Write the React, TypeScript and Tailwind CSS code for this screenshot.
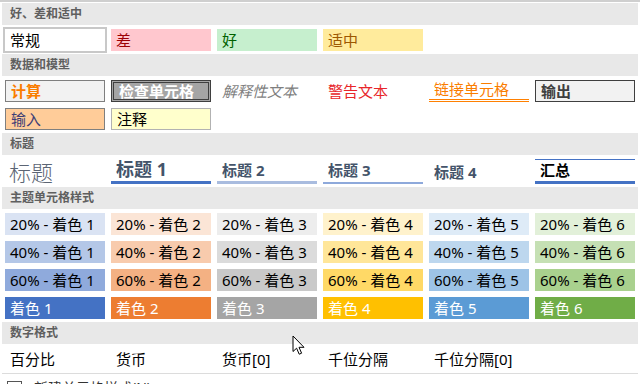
import type { ReactNode } from "react";

const font = { fontFamily: '"Noto Sans", "Noto Sans CJK SC", sans-serif' };

const accents = [
  { n: 1, c20: "bg-[#dae3f3]", c40: "bg-[#b4c7e7]", c60: "bg-[#8faadc]", c: "bg-[#4472c4]" },
  { n: 2, c20: "bg-[#fbe5d6]", c40: "bg-[#f8cbad]", c60: "bg-[#f4b183]", c: "bg-[#ed7d31]" },
  { n: 3, c20: "bg-[#ededed]", c40: "bg-[#dbdbdb]", c60: "bg-[#c9c9c9]", c: "bg-[#a5a5a5]" },
  { n: 4, c20: "bg-[#fff2cc]", c40: "bg-[#ffe699]", c60: "bg-[#ffd966]", c: "bg-[#ffc000]" },
  { n: 5, c20: "bg-[#deebf7]", c40: "bg-[#bdd7ee]", c60: "bg-[#9dc3e6]", c: "bg-[#5b9bd5]" },
  { n: 6, c20: "bg-[#e2f0d9]", c40: "bg-[#c5e0b4]", c60: "bg-[#a9d18e]", c: "bg-[#70ad47]" },
];

function Band({ children }: { children: ReactNode }) {
  return (
    <div className="h-[22px] bg-[#e8e8e8] pl-[8px] flex items-center text-[12px] font-bold text-[#5f5f5f]">
      {children}
    </div>
  );
}

function Rows({ children }: { children: ReactNode }) {
  return <div className="pt-[4px] pb-[3px] pl-[3px] flex flex-col gap-[6px]">{children}</div>;
}

function Row({ children }: { children: ReactNode }) {
  return <div className="grid grid-cols-[repeat(6,100px)] gap-x-[6px]">{children}</div>;
}

function Cell({ className = "", children }: { className?: string; children?: ReactNode }) {
  return (
    <div className={`h-[22px] flex items-center pl-[5px] text-[15px] leading-none whitespace-nowrap overflow-hidden ${className}`}>
      {children}
    </div>
  );
}

function Cursor() {
  return (
    <svg className="absolute left-[292px] top-[333px]" width="14" height="21" viewBox="0 0 14 21">
      <path
        d="M1 1 L1 16.5 L4.6 13.2 L7.2 19.2 L9.6 18.2 L7 12.3 L12 12.3 Z"
        fill="#ffffff"
        stroke="#000000"
        strokeWidth="1"
        strokeLinejoin="round"
      />
    </svg>
  );
}

export default function App() {
  return (
    <div className="relative w-[640px] h-[384px] overflow-hidden bg-white border-t-2 border-[#cfcfcf] px-[2px]" style={font}>
      <div className="mt-[1px]">
        <Band>好、差和适中</Band>
        <Rows>
          <Row>
            <Cell className="bg-white text-black shadow-[0_0_0_2px_#c8c8c8]">常规</Cell>
            <Cell className="bg-[#ffc7ce] text-[#9c0006]">差</Cell>
            <Cell className="bg-[#c6efce] text-[#006100]">好</Cell>
            <Cell className="bg-[#ffeb9c] text-[#9c5700]">适中</Cell>
          </Row>
        </Rows>

        <Band>数据和模型</Band>
        <Rows>
          <Row>
            <Cell className="bg-[#f2f2f2] border border-[#7f7f7f] text-[#fa7d00] font-bold">计算</Cell>
            <Cell className="bg-[#a5a5a5] border-[3px] border-double border-[#3f3f3f] text-white font-bold pl-[3px]">检查单元格</Cell>
            <Cell className="italic text-[#7f7f7f]">解释性文本</Cell>
            <Cell className="text-[#e8262a]">警告文本</Cell>
            <Cell className="text-[#fa7d00] border-b-[3px] border-double border-[#ff8001]">链接单元格</Cell>
            <Cell className="bg-[#f2f2f2] border border-[#3f3f3f] text-[#3f3f3f] font-bold">输出</Cell>
          </Row>
          <Row>
            <Cell className="bg-[#ffcc99] border border-[#7f7f7f] text-[#3f3f76]">输入</Cell>
            <Cell className="bg-[#ffffcc] border border-[#b2b2b2] text-black">注释</Cell>
          </Row>
        </Rows>

        <Band>标题</Band>
        <div className="pt-[4px] pb-[3px] pl-[3px]">
          <div className="grid grid-cols-[repeat(6,100px)] gap-x-[6px] h-[25px]">
            <div className="flex items-end pl-[4px] pb-[1px] text-[22px] leading-none font-light text-[#5b6574]">标题</div>
            <div className="flex items-end pl-[5px] pb-[3px] text-[18px] leading-none font-bold text-[#44546a] border-b-[3px] border-[#4472c4]">标题 1</div>
            <div className="flex items-end pl-[5px] pb-[3px] text-[15px] leading-none font-bold text-[#44546a] border-b-[3px] border-[#a9bcdf]">标题 2</div>
            <div className="flex items-end pl-[5px] pb-[4px] text-[15px] leading-none font-bold text-[#44546a] border-b-2 border-[#8ea9db]">标题 3</div>
            <div className="flex items-end pl-[5px] pb-[4px] text-[15px] leading-none font-bold text-[#44546a]">标题 4</div>
            <div className="flex items-end pl-[5px] pb-[3px] text-[15px] leading-none font-bold text-black border-t border-[#4472c4] border-b-[3px] border-b-double border-b-[#4472c4]">汇总</div>
          </div>
        </div>

        <Band>主题单元格样式</Band>
        <Rows>
          <Row>
            {accents.map((a) => (
              <Cell key={a.n} className={`${a.c20} text-black`}>20% - 着色 {a.n}</Cell>
            ))}
          </Row>
          <Row>
            {accents.map((a) => (
              <Cell key={a.n} className={`${a.c40} text-black`}>40% - 着色 {a.n}</Cell>
            ))}
          </Row>
          <Row>
            {accents.map((a) => (
              <Cell key={a.n} className={`${a.c60} text-black`}>60% - 着色 {a.n}</Cell>
            ))}
          </Row>
          <Row>
            {accents.map((a) => (
              <Cell key={a.n} className={`${a.c} text-white`}>着色 {a.n}</Cell>
            ))}
          </Row>
        </Rows>

        <Band>数字格式</Band>
        <Rows>
          <Row>
            <Cell className="text-black">百分比</Cell>
            <Cell className="text-black">货币</Cell>
            <Cell className="text-black">货币[0]</Cell>
            <Cell className="text-black">千位分隔</Cell>
            <Cell className="text-black">千位分隔[0]</Cell>
          </Row>
        </Rows>

        <div className="border-t border-[#dcdcdc] flex items-center gap-[12px] pl-[5px] pt-[4px] h-[24px] text-[14px] text-[#333]">
          <svg width="15" height="14" viewBox="0 0 15 14">
            <rect x="0.5" y="0.5" width="14" height="13" fill="#fff" stroke="#555" />
            <line x1="0.5" y1="4.5" x2="14.5" y2="4.5" stroke="#555" />
          </svg>
          <span>新建单元格样式(N)...</span>
        </div>
      </div>
      <Cursor />
    </div>
  );
}
